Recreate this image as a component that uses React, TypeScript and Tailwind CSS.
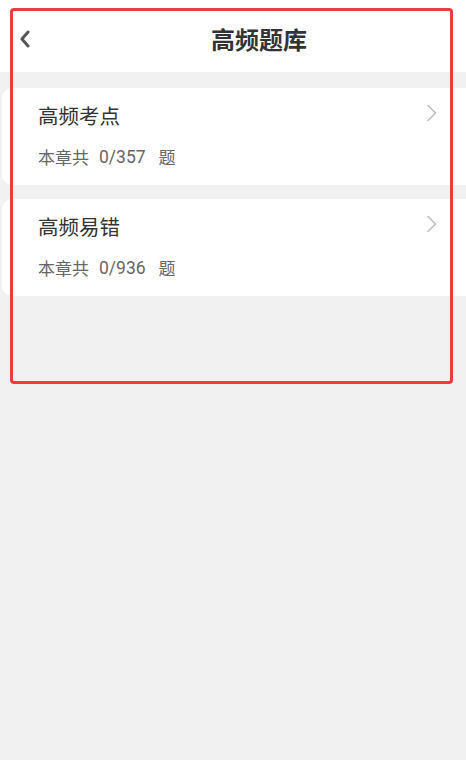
import React from 'react';

const items = [
  { title: '高频考点', done: 0, total: 357 },
  { title: '高频易错', done: 0, total: 936 },
];

const App = () => {
  return (
    <div
      className="relative min-h-[760px] w-full bg-[#f1f1f1]"
      style={{ fontFamily: '"Noto Sans CJK SC", "Noto Sans", sans-serif' }}
    >
      {/* Header */}
      <div className="flex h-[72px] items-center bg-white pt-[5px]">
        <div className="flex h-full w-[52px] items-center pl-[18px]">
          <svg width="14" height="18" viewBox="0 0 14 18" fill="none">
            <path d="M10 2 L4 9 L10 16" stroke="#555" strokeWidth="3" strokeLinecap="round" strokeLinejoin="round" />
          </svg>
        </div>
        <h1 className="flex-1 text-center text-[24px] font-bold leading-[32px] text-[#333]">高频题库</h1>
      </div>

      {/* List */}
      <div className="flex flex-col gap-[14px] pl-[2px] pt-[16px]">
        {items.map(item => (
          <div key={item.title} className="flex h-[97px] items-start rounded-l-[10px] bg-white pl-[36px] pr-[28px]">
            <div className="flex-1">
              <div className="mt-[12px] text-[20.5px] leading-[30px] text-[#333]">{item.title}</div>
              <div className="mt-[15px] flex items-center text-[17px] leading-[24px] text-[#666]">
                <span>本章共</span>
                <span className="ml-[10px] text-[17.5px]" style={{ fontFamily: 'Roboto, sans-serif' }}>{item.done}/{item.total}</span>
                <span className="ml-[13px]">题</span>
              </div>
            </div>
            <svg className="mt-[16px]" width="12" height="18" viewBox="0 0 12 18" fill="none">
              <path d="M2 1.5 L9.5 9 L2 16.5" stroke="#bdbdbd" strokeWidth="1.6" strokeLinecap="round" strokeLinejoin="round" />
            </svg>
          </div>
        ))}
      </div>

      {/* Annotation frame */}
      <div className="pointer-events-none absolute left-[10px] top-[8px] h-[376px] w-[443px] rounded-[4px] border-[3px] border-[#ee3b3b]" />
    </div>
  );
};

export default App;
